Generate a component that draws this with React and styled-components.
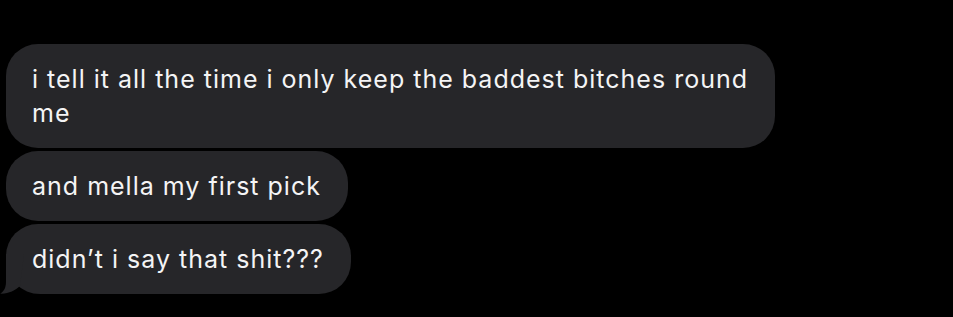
import React from 'react';
import styled, { createGlobalStyle } from 'styled-components';

const GlobalStyle = createGlobalStyle`
  html, body {
    margin: 0;
    padding: 0;
    background: #000;
  }
  body {
    width: 953px;
    height: 317px;
    overflow: hidden;
    font-family: Inter, "Noto Sans", sans-serif;
  }
`;

const StyledThread = styled.div`
  display: flex;
  flex-direction: column;
  align-items: flex-start;
  gap: 3px;
  padding: 44px 0 0 6px;
`;

const StyledBubble = styled.div`
  position: relative;
  max-width: 780px;
  box-sizing: border-box;
  padding: 18px 27px 18px 26px;
  border-radius: 32px;
  border-bottom-left-radius: ${(p) => (p.$tail ? '34px' : '32px')};
  background: #262629;
  color: #f4f4f5;
  font-size: 25px;
  line-height: 34px;
  letter-spacing: 1px;
  white-space: pre-line;
`;

const StyledTail = styled.svg`
  position: absolute;
  left: -6px;
  bottom: 0;
  width: 30px;
  height: 40px;
`;

const Tail = () => (
  <StyledTail viewBox="0 0 30 40">
    <path
      d="M6 0 L6 28 C6 34 3.5 38 0 39.6 C8 40.2 15 36.5 20 32 L24 0 Z"
      fill="#262629"
    />
  </StyledTail>
);

const messages = [
  'i tell it all the time i only keep the baddest bitches round\nme',
  'and mella my first pick',
  'didn’t i say that shit???',
];

const App = () => {
  return (
    <>
      <GlobalStyle />
      <StyledThread>
        {messages.map((text, i) => {
          const last = i === messages.length - 1;
          return (
            <StyledBubble key={i} $tail={last}>
              {text}
              {last && <Tail />}
            </StyledBubble>
          );
        })}
      </StyledThread>
    </>
  );
};

export default App;
